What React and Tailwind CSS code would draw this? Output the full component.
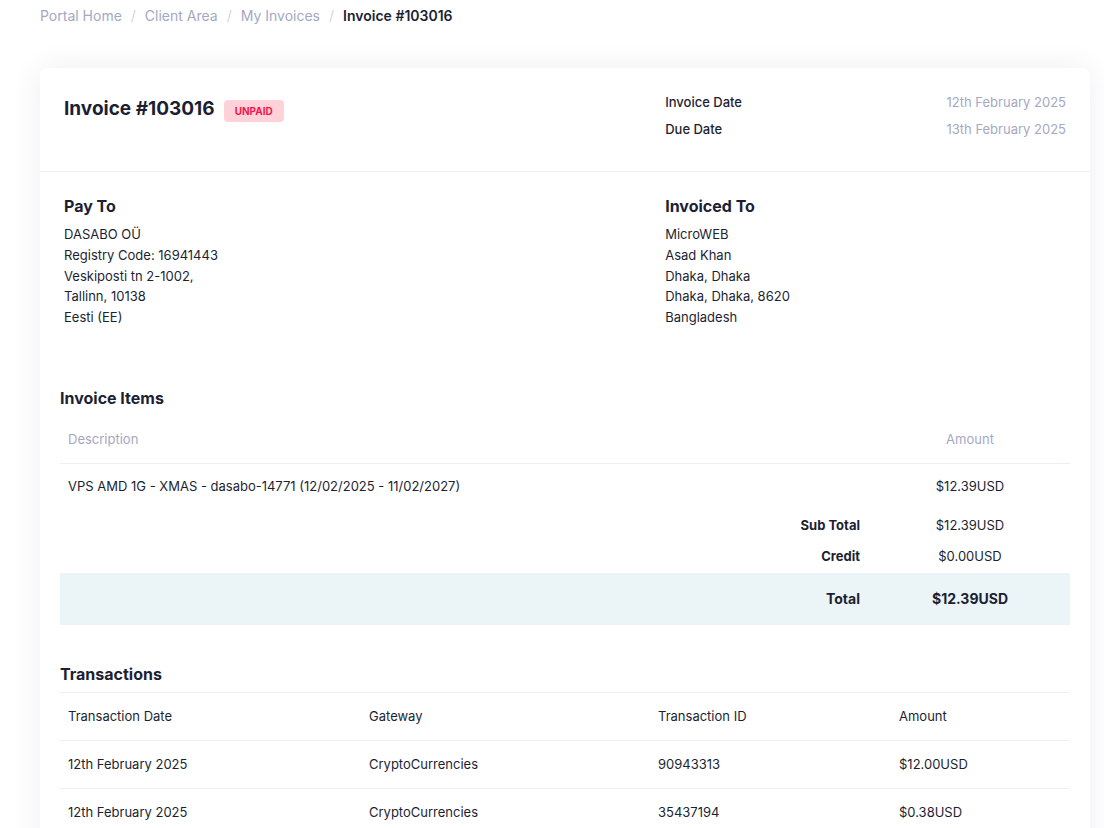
import React from 'react';

const dark = 'text-[#1c1f33]';

const payTo = ['DASABO OÜ', 'Registry Code: 16941443', 'Veskiposti tn 2-1002,', 'Tallinn, 10138', 'Eesti (EE)'];
const invoicedTo = ['MicroWEB', 'Asad Khan', 'Dhaka, Dhaka', 'Dhaka, Dhaka, 8620', 'Bangladesh'];

const transactions = [
  { date: '12th February 2025', gateway: 'CryptoCurrencies', id: '90943313', amount: '$12.00USD' },
  { date: '12th February 2025', gateway: 'CryptoCurrencies', id: '35437194', amount: '$0.38USD' },
];

function Breadcrumb() {
  const items = ['Portal Home', 'Client Area', 'My Invoices'];
  return (
    <nav className="flex items-center px-10 pt-[6px] text-[14px] leading-5">
      {items.map((item) => (
        <React.Fragment key={item}>
          <span className="text-[#a5a8c2]">{item}</span>
          <span className="mx-[9px] text-[#d3d5e3]">/</span>
        </React.Fragment>
      ))}
      <span className={`font-semibold ${dark}`}>Invoice #103016</span>
    </nav>
  );
}

function AddressBlock({ title, lines }) {
  return (
    <div>
      <h3 className={`text-[16px] leading-6 font-bold mb-[6px] ${dark}`}>{title}</h3>
      {lines.map((l) => (
        <p key={l} className={`text-[13px] leading-[20.8px] ${dark}`}>{l}</p>
      ))}
    </div>
  );
}

export default function App() {
  return (
    <div className="min-h-screen bg-white" style={{ fontFamily: 'Inter, "Noto Sans", sans-serif' }}>
      <Breadcrumb />

      <div className="mx-10 mt-[42px] w-[1050px] rounded-lg bg-white shadow-[0_0_32px_rgba(30,30,80,0.07)] pb-10">
        {/* header */}
        <div className="grid grid-cols-[3fr_2fr] px-6 pt-[21px] h-[104px] border-b border-[#eceef8]">
          <div className="flex items-center gap-[9px] mt-[6px] self-start">
            <h1 className={`text-[19px] leading-7 font-bold ${dark}`}>Invoice #103016</h1>
            <span className="mt-[4px] rounded bg-[#ffd2da] px-[11px] py-[4px] text-[10px] leading-[14px] font-bold text-[#f3164d]">UNPAID</span>
          </div>
          <div className="text-[13px]">
            <div className="flex justify-between h-[27px] items-center">
              <span className={`font-medium ${dark}`}>Invoice Date</span>
              <span className="text-[#a5a8c2]">12th February 2025</span>
            </div>
            <div className="flex justify-between h-[27px] items-center">
              <span className={`font-medium ${dark}`}>Due Date</span>
              <span className="text-[#a5a8c2]">13th February 2025</span>
            </div>
          </div>
        </div>

        {/* addresses */}
        <div className="grid grid-cols-[3fr_2fr] px-6 pt-[22px]">
          <AddressBlock title="Pay To" lines={payTo} />
          <AddressBlock title="Invoiced To" lines={invoicedTo} />
        </div>

        {/* invoice items */}
        <div className="px-5 mt-[58px]">
          <h2 className={`text-[16px] leading-6 font-bold mb-[6px] ${dark}`}>Invoice Items</h2>
          <div className="grid grid-cols-[1fr_200px] h-12 items-center border-b border-[#eceef8] text-[13px] text-[#a5a8c2]">
            <span className="pl-2">Description</span>
            <span className="text-center">Amount</span>
          </div>
          <div className={`grid grid-cols-[1fr_200px] h-[46px] items-center text-[13px] ${dark}`}>
            <span className="pl-2">VPS AMD 1G - XMAS - dasabo-14771 (12/02/2025 - 11/02/2027)</span>
            <span className="text-center">$12.39USD</span>
          </div>
          <div className={`grid grid-cols-[1fr_200px] h-[31px] items-center text-[13px] ${dark}`}>
            <span className="text-right pr-[10px] font-bold">Sub Total</span>
            <span className="text-center">$12.39USD</span>
          </div>
          <div className={`grid grid-cols-[1fr_200px] h-[31px] items-center text-[13px] ${dark}`}>
            <span className="text-right pr-[10px] font-bold">Credit</span>
            <span className="text-center">$0.00USD</span>
          </div>
          <div className={`grid grid-cols-[1fr_200px] h-[52px] mt-[1px] items-center bg-[#ebf4f7] text-[14px] font-bold ${dark}`}>
            <span className="text-right pr-[10px]">Total</span>
            <span className="text-center">$12.39USD</span>
          </div>
        </div>

        {/* transactions */}
        <div className="px-5 mt-[37px]">
          <h2 className={`text-[16px] leading-6 font-bold mb-[6px] ${dark}`}>Transactions</h2>
          <div className={`border-t border-[#eceef8] text-[13px] ${dark}`}>
            <div className="grid grid-cols-[301px_289px_241px_1fr] h-12 items-center border-b border-[#eceef8]">
              <span className="pl-2">Transaction Date</span>
              <span className="pl-2">Gateway</span>
              <span className="pl-2">Transaction ID</span>
              <span className="pl-2">Amount</span>
            </div>
            {transactions.map((t) => (
              <div key={t.id} className="grid grid-cols-[301px_289px_241px_1fr] h-12 items-center border-b border-[#eceef8]">
                <span className="pl-2">{t.date}</span>
                <span className="pl-2">{t.gateway}</span>
                <span className="pl-2">{t.id}</span>
                <span className="pl-2">{t.amount}</span>
              </div>
            ))}
          </div>
        </div>
      </div>
    </div>
  );
}
